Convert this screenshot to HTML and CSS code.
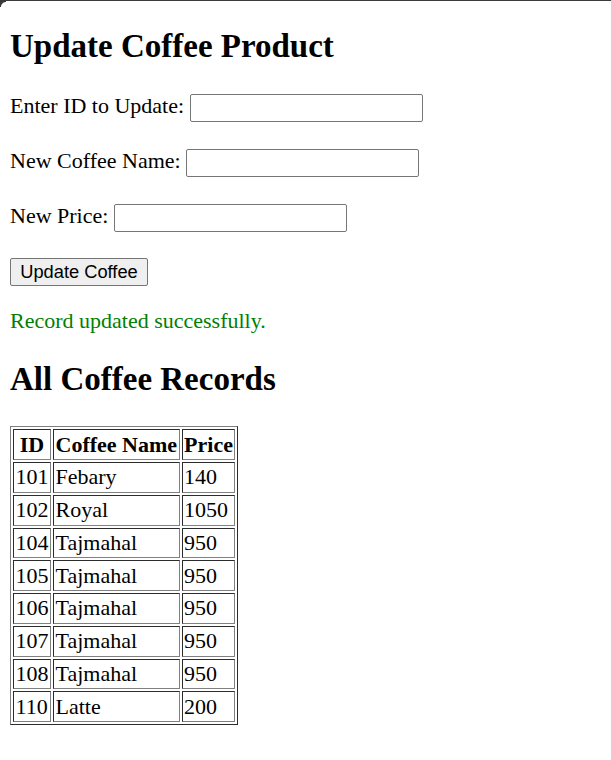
FILE: index.html
```html
<!DOCTYPE html>
<html>
<head>
<meta charset="utf-8">
<title>Update Coffee Product</title>
<link rel="stylesheet" href="styles.css">
</head>
<body>
<div class="frame-edge"></div>
<h2 class="title title-first">Update Coffee Product</h2>
<form class="update-form">
  <div class="form-row"><label>Enter ID to Update:</label><input type="text" class="field"></div>
  <div class="form-row"><label>New Coffee Name:</label><input type="text" class="field"></div>
  <div class="form-row"><label>New Price:</label><input type="text" class="field"></div>
  <div class="form-row"><button type="button" class="submit-btn">Update Coffee</button></div>
</form>
<p class="message">Record updated successfully.</p>
<h2 class="title">All Coffee Records</h2>
<table class="records">
  <tr><th>ID</th><th>Coffee Name</th><th>Price</th></tr>
  <tr><td>101</td><td>Febary</td><td>140</td></tr>
  <tr><td>102</td><td>Royal</td><td>1050</td></tr>
  <tr><td>104</td><td>Tajmahal</td><td>950</td></tr>
  <tr><td>105</td><td>Tajmahal</td><td>950</td></tr>
  <tr><td>106</td><td>Tajmahal</td><td>950</td></tr>
  <tr><td>107</td><td>Tajmahal</td><td>950</td></tr>
  <tr><td>108</td><td>Tajmahal</td><td>950</td></tr>
  <tr><td>110</td><td>Latte</td><td>200</td></tr>
</table>
</body>
</html>
```

FILE: styles.css
```css
html {
  background: #ffffff;
}
body {
  margin: 10px;
  font-family: "Liberation Serif", "Times New Roman", serif;
  font-size: 22px;
  line-height: 25.3px;
  color: #000;
}
.frame-edge {
  position: fixed;
  top: 0;
  left: 0;
  right: 0;
  height: 6px;
  border-top: 1px solid #3a3a3a;
  pointer-events: none;
}
.frame-edge::before {
  content: "";
  position: absolute;
  top: 0;
  left: 0;
  width: 6px;
  height: 6px;
  background: radial-gradient(circle at 100% 100%, rgba(0,0,0,0) 4.5px, #3a3a3a 5.5px);
}
.title {
  font-size: 33px;
  line-height: 37.9px;
  font-weight: bold;
  margin: 27.4px 0;
}
.title-first {
  margin-top: 18px;
}
.update-form {
  display: flex;
  flex-direction: column;
  gap: 27px;
}
.form-row {
  display: flex;
  align-items: baseline;
  gap: 5.5px;
  height: 28px;
}
.field {
  box-sizing: border-box;
  width: 233px;
  height: 28px;
  border: 1px solid #767676;
  border-radius: 2px;
  padding: 1px 3px;
  font-family: "Liberation Sans", Arial, sans-serif;
  font-size: 18px;
  background: #fff;
}
.submit-btn {
  box-sizing: border-box;
  height: 28px;
  width: 138px;
  padding: 0;
  border: 1px solid #767676;
  border-radius: 2px;
  background: #efefef;
  font-family: "Liberation Sans", Arial, sans-serif;
  font-size: 18.3px;
  color: #000;
}
.message {
  color: #008000;
  margin: 22px 0;
}
.records {
  border: 1px outset #808080;
  border-spacing: 2.5px;
}
.records th,
.records td {
  border: 1px inset #808080;
  padding: 1.25px 1.5px;
  line-height: 26.25px;
}
.records th {
  font-weight: bold;
  text-align: center;
}
.records td {
  text-align: left;
}
```
